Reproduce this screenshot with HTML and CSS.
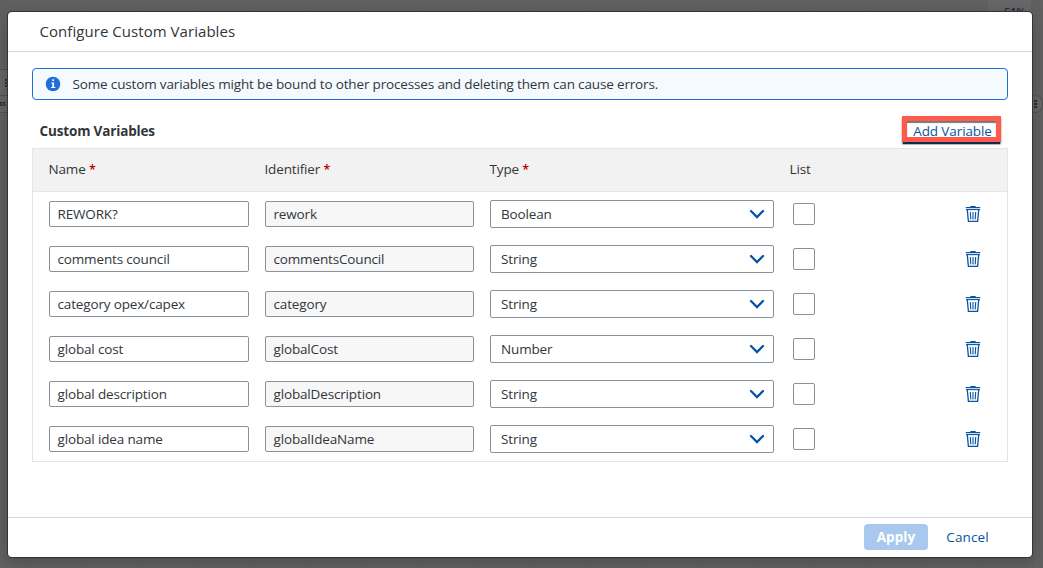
FILE: index.html
```html
<!DOCTYPE html>
<html lang="en">
<head>
<meta charset="utf-8">
<title>Configure Custom Variables</title>
<link rel="stylesheet" href="styles.css">
</head>
<body>
<svg width="0" height="0" class="defs">
  <symbol id="trash" viewBox="0 0 16 18">
    <path d="M5 2.2Q5 1 6.2 1h3.6Q11 1 11 2.2z" fill="currentColor"/>
    <path d="M.8 2.6h14.4" stroke="currentColor" stroke-width="1.2"/>
    <path d="M1 4.6h14" stroke="currentColor" stroke-width="1.1"/>
    <path d="M2.3 5l1.1 11.4h9.2L13.7 5" fill="none" stroke="currentColor" stroke-width="1.3"/>
    <path d="M5.3 7l.5 7.4M8 7v7.4M10.7 7l-.5 7.4" fill="none" stroke="currentColor" stroke-width="1.1"/>
  </symbol>
  <symbol id="chevron" viewBox="0 0 16 10">
    <path d="M2 2l6 6 6-6" fill="none" stroke="currentColor" stroke-width="2.3" stroke-linecap="round"/>
  </symbol>
</svg>
<div class="canvas">
  <div class="zoom-box"><span>51%</span></div>
  <div class="node-left"><span class="node-dots"></span></div>
  <div class="node-label">ss</div>
  <div class="node-right"><span class="node-dots"></span></div>
</div>
<div class="dialog">
  <header class="title">Configure Custom Variables</header>
  <main class="body">
    <div class="message">
      <svg class="info" viewBox="0 0 16 16"><circle cx="8" cy="8" r="7.3" fill="#1f6fdb"/><path d="M7.3 3.3h1.7v1.7H7.3zM6.2 6.5h2.9v4.6h1.2v1H6v-1h1.3V7.5H6.2z" fill="#fff"/></svg>
      <span>Some custom variables might be bound to other processes and deleting them can cause errors.</span>
    </div>
    <div class="toolbar"><h2>Custom Variables</h2><button class="add">Add Variable<i class="highlight"></i></button></div>
    <div class="table">
      <div class="row head"><span>Name <b>*</b></span><span>Identifier <b>*</b></span><span>Type <b>*</b></span><span class="list">List</span></div>
      <div class="row"><span class="input">REWORK?</span><span class="input readonly">rework</span><span class="select">Boolean<svg><use href="#chevron"/></svg></span><span class="check"></span><svg class="trash"><use href="#trash"/></svg></div>
      <div class="row"><span class="input">comments council</span><span class="input readonly">commentsCouncil</span><span class="select">String<svg><use href="#chevron"/></svg></span><span class="check"></span><svg class="trash"><use href="#trash"/></svg></div>
      <div class="row"><span class="input">category opex/capex</span><span class="input readonly">category</span><span class="select">String<svg><use href="#chevron"/></svg></span><span class="check"></span><svg class="trash"><use href="#trash"/></svg></div>
      <div class="row"><span class="input">global cost</span><span class="input readonly">globalCost</span><span class="select">Number<svg><use href="#chevron"/></svg></span><span class="check"></span><svg class="trash"><use href="#trash"/></svg></div>
      <div class="row"><span class="input">global description</span><span class="input readonly">globalDescription</span><span class="select">String<svg><use href="#chevron"/></svg></span><span class="check"></span><svg class="trash"><use href="#trash"/></svg></div>
      <div class="row"><span class="input">global idea name</span><span class="input readonly">globalIdeaName</span><span class="select">String<svg><use href="#chevron"/></svg></span><span class="check"></span><svg class="trash"><use href="#trash"/></svg></div>
    </div>
  </main>
  <footer class="footer"><button class="apply">Apply</button><button class="cancel">Cancel</button></footer>
</div>
</body>
</html>
```
FILE: styles.css
```css
* { box-sizing: border-box; }
body {
  margin: 0;
  width: 1043px;
  height: 568px;
  overflow: hidden;
  padding: 12px 11px 11px 8px;
  background: radial-gradient(circle, #565656 0.7px, transparent 1px) 0 0 / 7px 7px, #606060;
  font: 13.5px/20px "Open Sans", "Noto Sans", sans-serif;
  letter-spacing: -0.155px;
  color: #32363a;
}
button { font: inherit; letter-spacing: inherit; border: 0; padding: 0; background: none; }
.defs { position: absolute; }
.canvas { position: absolute; inset: 0; overflow: hidden; }
.zoom-box {
  position: absolute; left: 988px; top: -12px; width: 43px; height: 40px;
  border-radius: 3px; background: #666; color: #172c44;
}
.zoom-box span { position: absolute; left: 16px; top: 14px; font-size: 11px; font-weight: 600; }
.node-left { position: absolute; left: -10px; top: 69px; width: 30px; height: 44px; border: solid #505050; border-width: 1px 0; background: #646464; }
.node-left .node-dots { position: absolute; left: 15px; top: 9px; }
.node-label { position: absolute; left: -1px; top: 95px; width: 9px; height: 18px; border-top: 1px solid #505050; font-size: 7px; line-height: 16px; font-weight: 700; color: #252525; }
.node-right { position: absolute; left: 1020px; top: 95px; width: 23px; height: 18px; border: 1px solid #505050; border-radius: 8px; background: #646464; }
.node-right .node-dots { position: absolute; left: 13px; top: 4px; }
.node-dots { width: 3px; height: 8px; background: repeating-linear-gradient(#303030 0 2px, transparent 2px 3px); }
.dialog {
  position: relative;
  height: 545px;
  display: flex;
  flex-direction: column;
  background: #fff;
  border-radius: 4px;
  box-shadow: 0 0 0 1px #343434, 0 4px 14px rgba(0, 0, 0, .22);
}
.title { height: 40px; padding: 0 31.5px; line-height: 39px; font-size: 15px; letter-spacing: .05px; border-bottom: 1px solid #d9d9d9; }
.body { flex: 1; padding: 16px 24px 0; }
.message { height: 32px; display: flex; align-items: center; gap: 12px; padding-left: 11.5px; border: 1px solid #1f6fdb; border-radius: 4px; background: #f5faff; }
.info { width: 16px; height: 16px; }
.toolbar { height: 48px; padding: 15px 7px 0 7.5px; display: flex; justify-content: space-between; }
.toolbar h2 { margin: 0; font-size: 13.5px; line-height: 32px; font-weight: 700; }
.add { position: relative; width: 98px; height: 30px; padding-left: 1px; color: #0854a0; line-height: 32px; letter-spacing: -.1px; }
.highlight { position: absolute; left: -1px; top: 1px; width: 99px; height: 26px; border: 5px solid #ff5a4b; box-shadow: 0 3px 1px -1px #102c4b, 0 2px 2px #888, inset 0 2px 1px #777; }
.table { height: 314px; border: 1px solid #e5e5e5; }
.row { display: grid; grid-template-columns: 200px 209px 284px 159px 16px; column-gap: 16px; align-items: center; height: 45px; padding: 0 0 1px 16px; }
.row + .row { padding-bottom: 2px; }
.head { height: 43px; padding-bottom: 2px; background: #f2f2f2; border-bottom: 1px solid #e5e5e5; }
.head span { margin-left: -.5px; }
.head b { color: #b00; font-weight: 600; font-size: 12.5px; }
.input, .select { height: 26px; padding: 0 7.5px; border: 1px solid #89919a; border-radius: 2px; line-height: 24px; background: #fff; }
.readonly { background: #f7f7f7; }
.select { height: 28px; display: flex; justify-content: space-between; align-items: center; padding: 0 8px 0 10px; }
.select svg { width: 16px; height: 10px; color: #0854a0; }
.check { width: 22px; height: 22px; margin-left: 3px; border: 1px solid #89919a; border-radius: 2px; }
.trash { width: 16px; height: 18px; color: #0854a0; }
.footer { height: 40px; padding: 0 43px 1px 0; display: flex; align-items: center; justify-content: flex-end; gap: 18px; border-top: 1px solid #d9d9d9; }
.apply { width: 64px; height: 26px; border-radius: 4px; background: #a9c8ee; color: #fff; font-weight: 700; letter-spacing: .1px; }
.cancel { width: 43px; color: #0854a0; letter-spacing: .1px; }
```
